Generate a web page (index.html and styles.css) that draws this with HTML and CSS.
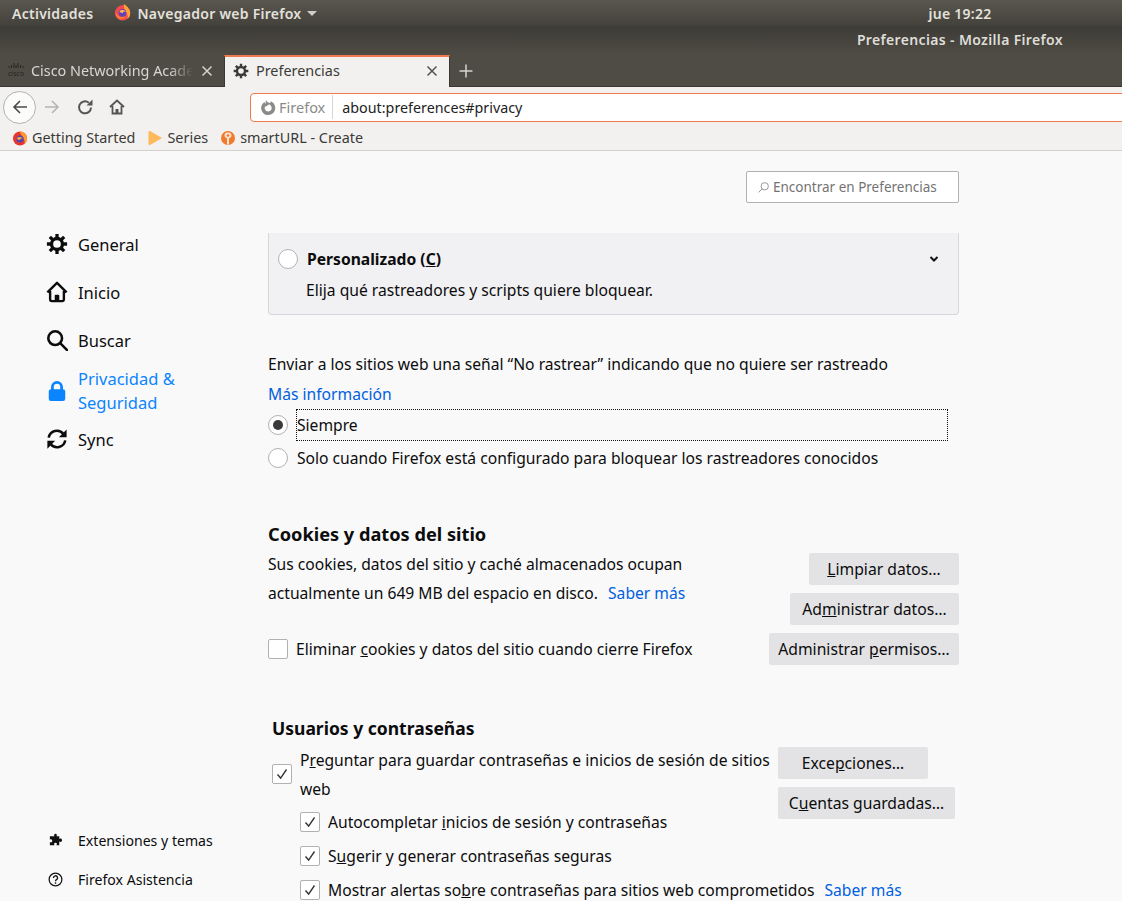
FILE: index.html
```html
<!DOCTYPE html>
<html lang="es">
<head>
<meta charset="utf-8">
<title>Preferencias - Mozilla Firefox</title>
<link rel="stylesheet" href="styles.css">
</head>
<body>
<header class="panel">
  <span class="panel-item activities">Actividades</span>
  <span class="panel-item app">
    <svg class="fx-app" viewBox="0 0 20 20"><circle cx="9.500" cy="11" r="8.500" fill="#f4494f"/><path d="M11 1c3 2 4 3 5 5 1.500 1 2 3 2 5 0 3-1 5-3 6.500 1-4-.5-7-3-9-.5-3-1.500-5-1-7.500z" fill="#ffa436"/><path d="M1.500 9c.5 3 3 6 7 6 3 0 5-1.500 6-4-1 5-4 7-7 7-4 0-6-4-6-9z" fill="#ff7a2e"/><circle cx="9.500" cy="11" r="4.300" fill="#6a3fb5"/><path d="M6 9.500c2-2.500 6-2 7.500.5-2-1-3.500-.5-3.500 1-2 0-3.500-.5-4-1.500z" fill="#ffbd4f"/></svg>
    <span>Navegador web Firefox</span><i class="caret"></i>
  </span>
  <span class="panel-item clock">jue 19:22</span>
</header>
<div class="titlebar"><span class="title">Preferencias - Mozilla Firefox</span></div>
<div class="tabstrip">
  <div class="tab">
    <svg class="tab-icon" viewBox="0 0 16 8"><path d="M1 4v2M3.500 3v3M6 1v5M8 3v3M10 1v5M12.500 3v3M15 4v2" stroke="#26241f" stroke-width="1" fill="none"/></svg>
    <span class="cisco-word">cisco</span>
    <span class="tab-label fade">Cisco Networking Academy</span>
    <svg class="close" viewBox="0 0 12 12"><path d="M1.500 1.500l9 9M10.500 1.500l-9 9" stroke="#d5d3ce" stroke-width="1.500"/></svg>
  </div>
  <div class="tab active">
    <svg class="tab-gear" viewBox="0 0 24 24"><use href="#gear"/></svg>
    <span class="tab-label">Preferencias</span>
    <svg class="close" viewBox="0 0 12 12"><path d="M1.500 1.500l9 9M10.500 1.500l-9 9" stroke="#55534e" stroke-width="1.500"/></svg>
  </div>
  <svg class="newtab" viewBox="0 0 14 14"><path d="M7 .5v13M.5 7h13" stroke="#d5d3ce" stroke-width="1.500"/></svg>
</div>
<nav class="navbar">
  <span class="back"><svg viewBox="0 0 16 16"><path d="M15 8H2M8 2L2 8l6 6" fill="none" stroke="#4a4a4a" stroke-width="1.600"/></svg></span>
  <svg class="nav-icon forward" viewBox="0 0 16 16"><path d="M1 8h13M8 2l6 6-6 6" fill="none" stroke="#b4b4b2" stroke-width="1.600"/></svg>
  <svg class="nav-icon reload" viewBox="0 0 16 16"><path d="M14 8.500a6 6 0 1 1-2.200-4.800" fill="none" stroke="#555" stroke-width="2"/><path d="M9.500 6.500h6v-6z" fill="#555"/></svg>
  <svg class="nav-icon home" viewBox="0 0 16 16"><path d="M1 8l7-6.500L15 8M3.500 7v7.500h9V7" fill="none" stroke="#555" stroke-width="1.800"/><path d="M6.500 14.500v-4.500h3v4.500" fill="#555"/></svg>
  <div class="urlbar">
    <svg class="identity" viewBox="0 0 16 16"><path d="M6 4.200a5 5 0 1 0 4.500-.4" fill="none" stroke="#8a8a88" stroke-width="3.400"/><path d="M6.500 .5c.5 2 2 3 4.500 3.500L6 7.500z" fill="#8a8a88"/></svg>
    <span class="identity-label">Firefox</span>
    <span class="url">about:preferences#privacy</span>
  </div>
</nav>
<div class="bookmarks">
  <span class="bookmark"><svg viewBox="0 0 16 16"><circle cx="8" cy="8.500" r="7" fill="#e8352e"/><path d="M8 1.500a7 7 0 0 1 7 7c0 2.500-1 4-2.500 5.500C13 10 11.500 7 10 6 9 4.500 8 3 8 1.500z" fill="#ff9a2e"/><circle cx="8" cy="9" r="3.500" fill="#4f46b5"/><path d="M5 8c2-2 5-1 6 1-2-1-3 0-3 1-2 0-3-1-3-2z" fill="#ffa93a"/></svg><span>Getting Started</span></span>
  <span class="bookmark"><svg viewBox="0 0 16 16"><path d="M1.500 2c0-1 .8-1.300 1.500-1L15 8 3 15c-.7.300-1.500 0-1.500-1z" fill="#fdb95c"/></svg><span>Series</span></span>
  <span class="bookmark"><svg viewBox="0 0 16 16"><circle cx="8" cy="8" r="7" fill="#f07a2e"/><path d="M4.500 5.500a3.500 3 0 0 1 7 0c0 2-2 2.500-2.500 3v6H7v-6c-.5-.5-2.500-1-2.500-3z" fill="#fbe3cf"/><circle cx="8" cy="5.500" r="1.300" fill="#f07a2e"/></svg><span>smartURL - Create</span></span>
</div>

<svg class="defs" aria-hidden="true"><defs><g id="gear"><circle cx="12" cy="12" r="6" fill="none" stroke="currentColor" stroke-width="3.600"/><path d="M12 1v5M12 18v5M1 12h5M18 12h5M4.200 4.200l3.500 3.500M16.300 16.300l3.500 3.500M4.200 19.800l3.500-3.500M16.300 7.700l3.500-3.500" stroke="currentColor" stroke-width="3.600"/></g></defs></svg>

<div class="prefs">
  <aside class="sidebar">
    <ul class="cats">
      <li class="cat"><svg viewBox="0 0 24 24"><use href="#gear"/></svg><span>General</span></li>
      <li class="cat"><svg viewBox="0 0 24 24"><path d="M1.500 12.500L12 2l10.500 10.500M4.500 11v9a2 2 0 0 0 2 2h11a2 2 0 0 0 2-2v-9" fill="none" stroke="currentColor" stroke-width="2.600" stroke-linejoin="round"/><path d="M9.500 22v-6a1 1 0 0 1 1-1h3a1 1 0 0 1 1 1v6z" fill="currentColor"/></svg><span>Inicio</span></li>
      <li class="cat"><svg viewBox="0 0 24 24"><circle cx="10" cy="10" r="7.500" fill="none" stroke="currentColor" stroke-width="2.800"/><path d="M15.500 15.500L23 23" stroke="currentColor" stroke-width="2.800" stroke-linecap="round"/></svg><span>Buscar</span></li>
      <li class="cat selected"><svg viewBox="0 0 24 24"><path d="M7 11V7.500a5 5 0 0 1 10 0V11" fill="none" stroke="currentColor" stroke-width="3"/><rect x="3" y="10" width="18" height="13" rx="2.500" fill="currentColor"/></svg><span>Privacidad &amp;<br>Seguridad</span></li>
      <li class="cat sync"><svg viewBox="0 0 24 24"><path d="M3 10.500A9 9 0 0 1 19 6.500M21 13.500A9 9 0 0 1 5 17.500" fill="none" stroke="currentColor" stroke-width="2.800"/><path d="M22.500 1.500v8.500H14zM1.500 22.500V14H10z" fill="currentColor"/></svg><span>Sync</span></li>
    </ul>
    <ul class="foot">
      <li class="foot-item"><svg viewBox="0 0 16 16"><path d="M5.500 3.500H7C6 2.500 6.500.8 8 .8s2 1.700 1 2.700h3v3c1-1 3-.5 3 1.200s-2 2.300-3 1.300v4H9c1-1 .5-2.500-1-2.500S6 12 7 13H2V9.500C3 10.500 4.500 10 4.500 8.500S3 6.200 2 7.200V3.500z" fill="#111"/></svg><span>Extensiones y temas</span></li>
      <li class="foot-item"><svg viewBox="0 0 16 16"><circle cx="8" cy="8" r="6.800" fill="none" stroke="#111" stroke-width="1.300"/><path d="M5.800 6.300A2.200 2.200 0 1 1 9 8.200c-.7.400-1 .8-1 1.600" fill="none" stroke="#111" stroke-width="1.400"/><circle cx="8" cy="11.700" r=".9" fill="#111"/></svg><span>Firefox Asistencia</span></li>
    </ul>
  </aside>
  <main class="main">
    <div class="search-row">
      <div class="search">
        <svg viewBox="0 0 16 16"><circle cx="9.500" cy="6.500" r="4.500" fill="none" stroke="#8a8a8a" stroke-width="1.100"/><path d="M6.300 9.700L2 14" stroke="#8a8a8a" stroke-width="1.100"/></svg>
        <span>Encontrar en Preferencias</span>
      </div>
    </div>
    <section class="card">
      <div class="card-head">
        <span class="radio"></span>
        <strong class="card-title">Personalizado (<u>C</u>)</strong>
        <svg class="chev" viewBox="0 0 10 8"><path d="M1.500 2L5 5.500 8.500 2" fill="none" stroke="#111" stroke-width="2"/></svg>
      </div>
      <p class="card-desc">Elija qué rastreadores y scripts quiere bloquear.</p>
    </section>
    <p class="dnt">Enviar a los sitios web una señal “No rastrear” indicando que no quiere ser rastreado</p>
    <a class="link more">Más información</a>
    <div class="radio-row first"><span class="radio on"></span><span class="focus">Siempre</span></div>
    <div class="radio-row"><span class="radio"></span><span class="radio-text">Solo cuando Firefox está configurado para bloquear los rastreadores conocidos</span></div>

    <h2 class="h cookies-h">Cookies y datos del sitio</h2>
    <div class="cookies">
      <p class="cookies-text">Sus cookies, datos del sitio y caché almacenados ocupan<br>actualmente un 649 MB del espacio en disco. <a class="link learn">Saber más</a></p>
      <div class="btns">
        <span class="btn b1"><span><u>L</u>impiar datos…</span></span>
        <span class="btn b2"><span>Ad<u>m</u>inistrar datos…</span></span>
      </div>
    </div>
    <div class="cookies-row">
      <span class="check"></span>
      <span class="cookies-del">Eliminar <u>c</u>ookies y datos del sitio cuando cierre Firefox</span>
      <span class="btn b3"><span>Administrar <u>p</u>ermisos…</span></span>
    </div>

    <h2 class="h users-h">Usuarios y contraseñas</h2>
    <div class="users">
      <span class="check on top"><svg viewBox="0 0 20 20"><path d="M5 10.500l3.500 4L15 5" fill="none" stroke="#333" stroke-width="1.500"/></svg></span>
      <p class="users-text">P<u>r</u>eguntar para guardar contraseñas e inicios de sesión de sitios web</p>
      <div class="users-btns">
        <span class="btn b4"><span>Exce<u>p</u>ciones…</span></span>
        <span class="btn b5"><span>C<u>u</u>entas guardadas…</span></span>
      </div>
    </div>
    <div class="sub"><span class="check on"><svg viewBox="0 0 20 20"><path d="M5 10.500l3.500 4L15 5" fill="none" stroke="#333" stroke-width="1.500"/></svg></span><span>Autocompletar <u>i</u>nicios de sesión y contraseñas</span></div>
    <div class="sub"><span class="check on"><svg viewBox="0 0 20 20"><path d="M5 10.500l3.500 4L15 5" fill="none" stroke="#333" stroke-width="1.500"/></svg></span><span>S<u>u</u>gerir y generar contraseñas seguras</span></div>
    <div class="sub last"><span class="check on"><svg viewBox="0 0 20 20"><path d="M5 10.500l3.500 4L15 5" fill="none" stroke="#333" stroke-width="1.500"/></svg></span><span>Mostrar alertas so<u>b</u>re contraseñas para sitios web comprometidos <a class="link tail">Saber más</a></span></div>
  </main>
</div>
</body>
</html>
```
FILE: styles.css
```css
* { box-sizing: border-box; }
html, body { margin: 0; height: 901px; overflow: hidden; }
body { font-family: "Noto Sans", "Open Sans", sans-serif; font-size: 15.65px; color: #0c0c0d; background: #f9f9fa; width: 1122px; display: flex; flex-direction: column; }
p, h2, ul { margin: 0; padding: 0; list-style: none; }
.defs { width: 0; height: 0; position: absolute; }

.panel { height: 26px; flex: none; display: flex; align-items: center; background: linear-gradient(#5a574f, #43413b); color: #e3e1dc; font-weight: 600; font-size: 14px; letter-spacing: .27px; }
.activities { margin-left: 12px; }
.app { margin-left: 21px; display: flex; align-items: center; gap: 5px; }
.fx-app { width: 18px; height: 18px; margin-bottom: 2px; }
.caret { width: 0; height: 0; border: 5px solid transparent; border-top-color: #cfcdc8; border-bottom: 0; margin-left: 1px; }
.clock { margin-left: 611px; }

.titlebar { height: 29px; flex: none; display: flex; justify-content: flex-end; align-items: flex-start; padding: 4px 59px 0 0; background: linear-gradient(#3d3b36, #4f4c45); color: #dfddd8; font-weight: 600; font-size: 14px; }
.title { letter-spacing: .35px; }

.tabstrip { height: 32px; flex: none; display: flex; align-items: stretch; background: #4f4c45; border-bottom: 1px solid #3a3833; }
.tab { width: 224px; display: flex; align-items: center; position: relative; padding: 0 11px 0 8px; color: #d8d6d1; font-size: 14.4px; }
.tab.active { width: 226px; margin-bottom: -1px; background: #f2f1ef; color: #3b3a37; border-top: 2px solid #ef7a50; border-left: 1px solid #3a3833; border-right: 1px solid #3a3833; padding: 0 11px 3px 8px; }
.tab-icon { width: 16px; height: 8px; flex: none; margin-top: -9px; }
.cisco-word { position: absolute; left: 8px; top: 15px; font-size: 7px; line-height: 8px; color: #26241f; }
.tab-gear { width: 16px; height: 16px; flex: none; color: #3a3a38; }
.tab-label { flex: 1; min-width: 0; margin-left: 7px; white-space: nowrap; overflow: hidden; }
.fade { -webkit-mask-image: linear-gradient(90deg, #000 85%, transparent); mask-image: linear-gradient(90deg, #000 85%, transparent); }
.close { width: 12px; height: 12px; flex: none; margin-left: 8px; }
.newtab { width: 14px; height: 14px; align-self: center; margin-left: 9px; }

.navbar { height: 38px; flex: none; display: flex; align-items: center; background: #f2f1ef; padding-top: 2px; overflow: hidden; }
.back { width: 33px; height: 33px; margin-left: 3px; flex: none; border: 1px solid #b1b1af; border-radius: 50%; background: #fbfbfa; display: flex; align-items: center; justify-content: center; }
.back svg { width: 16px; height: 16px; }
.nav-icon { width: 16px; height: 16px; flex: none; }
.forward { margin-left: 8px; }
.reload { margin-left: 17px; }
.home { margin-left: 16px; }
.urlbar { flex: none; width: 900px; height: 29px; margin-left: 125px; display: flex; align-items: center; background: #fff; border: 1px solid #ef7a50; border-radius: 4px 0 0 4px; }
.identity { width: 17px; height: 17px; margin-left: 8px; flex: none; }
.identity-label { color: #8b8b89; font-size: 14.5px; margin-left: 3px; padding-right: 7px; border-right: 1px solid #d6d6d4; line-height: 24px; }
.url { margin-left: 9px; font-size: 14.3px; color: #222; }

.bookmarks { height: 26px; flex: none; display: flex; align-items: center; background: #f2f1ef; border-bottom: 1px solid #d3d0cb; padding-left: 12px; gap: 12px; color: #3b3a37; font-size: 14.4px; }
.bookmark { display: flex; align-items: center; gap: 4px; }
.bookmark svg { width: 16px; height: 16px; flex: none; }

.prefs { flex: 1; min-height: 0; display: flex; overflow: hidden; }
.sidebar { width: 268px; flex: none; display: flex; flex-direction: column; justify-content: space-between; padding: 77px 0 2px 46px; }
.cats { font-size: 16.5px; }
.cat { display: flex; align-items: center; gap: 10px; height: 32px; margin-bottom: 16px; }
.cat svg { width: 22px; height: 22px; flex: none; }
.cat.selected { color: #0a84ff; height: 48px; line-height: 24px; margin-bottom: 0; margin-top: -5px; }
.cat.sync { margin-top: 8px; }
.foot { font-size: 14.1px; }
.foot-item { display: flex; align-items: center; gap: 15px; height: 39px; margin-left: 2px; }
.foot-item svg { width: 15px; height: 15px; flex: none; }

.main { width: 691px; flex: none; }
.search-row { display: flex; justify-content: flex-end; padding-top: 20px; }
.search { width: 213px; height: 32px; border: 1px solid #b1b1b3; border-radius: 2px; background: #fff; display: flex; align-items: center; padding-left: 10px; gap: 3px; color: #737373; font-size: 13.5px; }
.search svg { width: 13px; height: 13px; flex: none; }

.card { margin-top: 30px; height: 82px; background: #f1f1f3; border: 1px solid #d7d7db; border-top: 0; border-radius: 0 0 4px 4px; padding: 15px 0 0 9px; }
.card-head { display: flex; align-items: center; height: 22px; }
.card-title { font-weight: 700; margin-left: 9px; }
.chev { width: 10px; height: 8px; margin-left: auto; margin-right: 19px; }
.card-desc { margin: 9px 0 0 28px; line-height: 22px; }
.radio { width: 20px; height: 20px; flex: none; border-radius: 50%; border: 1px solid #b1b1b3; background: #fff; display: inline-flex; align-items: center; justify-content: center; }
.radio.on::after { content: ""; width: 10px; height: 10px; border-radius: 50%; background: #3a3a3c; }

.dnt { margin-top: 38px; line-height: 22px; }
.link { color: #0060df; }
.more { display: block; margin-top: 8px; line-height: 22px; }
.radio-row { display: flex; align-items: center; height: 32px; margin-right: 11px; }
.radio-row.first { margin-top: 4px; height: 32px; }
.focus { flex: 1; height: 32px; display: flex; align-items: center; margin-left: 8px; padding-left: 1px; outline: 1px dotted #111; outline-offset: -1px; }
.radio-text { margin-left: 9px; }
.radio-row + .radio-row { margin-top: 1px; }

.h { font-weight: 700; line-height: 24px; }
.cookies-h { margin-top: 48px; font-size: 18.2px; }
.cookies { display: flex; justify-content: space-between; margin-top: 7px; }
.cookies-text { line-height: 29px; margin-top: -4px; padding-top: 1px; }
.learn { margin-left: 6px; }
.btns { display: flex; flex-direction: column; align-items: flex-end; gap: 8px; }
.btn { height: 32px; display: flex; align-items: center; justify-content: center; background: #e3e3e5; border-radius: 2px; white-space: nowrap; font-size: 15.7px; }
.b1 { width: 150px; }
.b2 { width: 169px; }
.b3 { width: 190px; margin-left: auto; }
.check { width: 20px; height: 20px; flex: none; border: 1px solid #b1b1b3; border-radius: 2px; background: #fff; display: inline-flex; }
.check svg { width: 18px; height: 18px; }
.cookies-row { display: flex; align-items: center; margin-top: 8px; }
.cookies-del { margin-left: 8px; }

.users-h { margin: 51px 0 0 4px; font-size: 17.5px; }
.users { display: flex; align-items: flex-start; height: 60px; margin: 5px 0 0 4px; }
.check.top { margin-top: 19px; }
.users-text { width: 478px; margin: 1px 0 0 8px; line-height: 29px; }
.users-btns { display: flex; flex-direction: column; gap: 8px; margin-top: 2px; }
.b4 { width: 150px; }
.b5 { width: 177px; }
.sub { display: flex; align-items: center; height: 34px; margin-left: 32px; }
.sub.last { height: 33px; }
.sub .check { margin-right: 8px; }
.tail { margin-left: 6px; }
```
